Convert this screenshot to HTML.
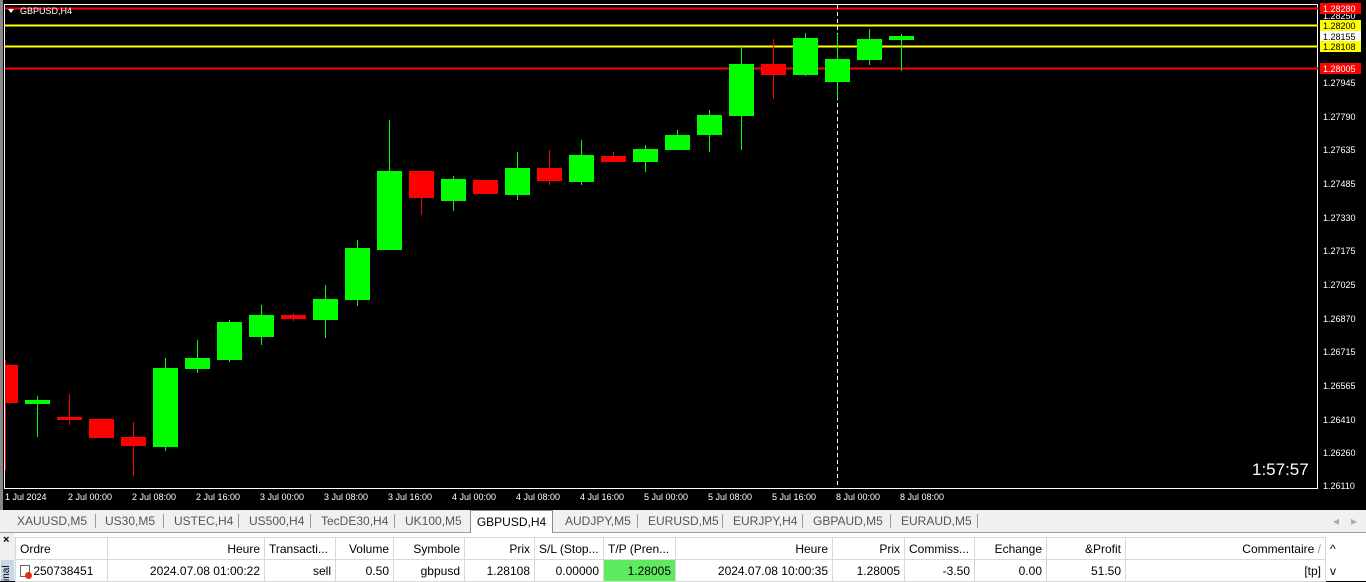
<!DOCTYPE html>
<html><head><meta charset="utf-8"><style>
*{margin:0;padding:0;box-sizing:border-box}
body{width:1366px;height:581px;overflow:hidden;background:#000;font-family:"Liberation Sans",sans-serif;position:relative}
.tabs{position:absolute;left:0;top:510px;width:1366px;height:23px;background:#f0f0f0;border-bottom:1px solid #a0a0a0;font-size:12px;color:#555}
.tab{position:absolute;top:4px}
.sep{position:absolute;top:4px;width:1px;height:14px;background:#999}
.act{position:absolute;left:470px;top:0;width:83px;height:23px;background:#fff;border:1px solid #888;border-bottom:none;color:#000;text-align:center;padding-top:4px}
.tbl{position:absolute;left:0;top:533px;width:1366px;height:48px;background:#fff}
.lstrip{position:absolute;left:0;top:533px;width:15px;height:48px;background:#f0f0f0}
table{position:absolute;left:15px;top:537px;border-collapse:collapse;font-size:12px;color:#000}
td{height:22px;border:1px solid #d8d8d8;padding:0 4px;white-space:nowrap;overflow:hidden}
tr.h td{height:22px}
.r{text-align:right}
</style></head><body>
<svg width="1366" height="510" style="position:absolute;left:0;top:0" font-family="Liberation Sans" font-size="9">
<rect x="0" y="0" width="1366" height="510" fill="#000"/>
<rect x="0" y="0" width="3" height="510" fill="#888"/>
<rect x="4.5" y="4.5" width="1313" height="484" fill="none" stroke="#fff"/>
<line x1="5" y1="8.5" x2="1318" y2="8.5" stroke="#f00" stroke-width="2"/>
<line x1="5" y1="25.5" x2="1318" y2="25.5" stroke="#ff0" stroke-width="2"/>
<line x1="5" y1="46.5" x2="1318" y2="46.5" stroke="#ff0" stroke-width="2"/>
<line x1="5" y1="68.5" x2="1318" y2="68.5" stroke="#f00" stroke-width="2"/>
<line x1="837.5" y1="5" x2="837.5" y2="488" stroke="#fff" stroke-dasharray="4,3"/>
<g id="c"></g>
<polygon points="8,9 14,9 11,13" fill="#fff"/>
<text x="20" y="14" fill="#fff">GBPUSD,H4</text>
<g fill="#fff">
<text x="1323" y="19">1.28250</text><text x="1323" y="86">1.27945</text><text x="1323" y="120">1.27790</text>
<text x="1323" y="153">1.27635</text><text x="1323" y="187">1.27485</text><text x="1323" y="221">1.27330</text>
<text x="1323" y="254">1.27175</text><text x="1323" y="288">1.27025</text><text x="1323" y="322">1.26870</text>
<text x="1323" y="355">1.26715</text><text x="1323" y="389">1.26565</text><text x="1323" y="423">1.26410</text>
<text x="1323" y="456">1.26260</text><text x="1323" y="489">1.26110</text>
</g>
<rect x="1320" y="3" width="41" height="11" fill="#f00"/><text x="1323" y="12" fill="#fff">1.28280</text>
<rect x="1320" y="20" width="41" height="11" fill="#ff0"/><text x="1323" y="29" fill="#000">1.28200</text>
<rect x="1320" y="31" width="41" height="11" fill="#fff"/><text x="1323" y="40" fill="#000">1.28155</text>
<rect x="1320" y="41" width="41" height="11" fill="#ff0"/><text x="1323" y="50" fill="#000">1.28108</text>
<rect x="1320" y="63" width="41" height="11" fill="#f00"/><text x="1323" y="72" fill="#fff">1.28005</text>
<g fill="#fff">
<text x="5" y="500">1 Jul 2024</text><text x="68" y="500">2 Jul 00:00</text><text x="132" y="500">2 Jul 08:00</text>
<text x="196" y="500">2 Jul 16:00</text><text x="260" y="500">3 Jul 00:00</text><text x="324" y="500">3 Jul 08:00</text>
<text x="388" y="500">3 Jul 16:00</text><text x="452" y="500">4 Jul 00:00</text><text x="516" y="500">4 Jul 08:00</text>
<text x="580" y="500">4 Jul 16:00</text><text x="644" y="500">5 Jul 00:00</text><text x="708" y="500">5 Jul 08:00</text>
<text x="772" y="500">5 Jul 16:00</text><text x="836" y="500">8 Jul 00:00</text><text x="900" y="500">8 Jul 08:00</text>
</g>
<text x="1252" y="475" fill="#fff" font-size="17">1:57:57</text>
</svg>
<div class="tabs">
<span class="tab" style="left:17px">XAUUSD,M5</span><span class="sep" style="left:95px"></span>
<span class="tab" style="left:105px">US30,M5</span><span class="sep" style="left:163px"></span>
<span class="tab" style="left:174px">USTEC,H4</span><span class="sep" style="left:238px"></span>
<span class="tab" style="left:249px">US500,H4</span><span class="sep" style="left:310px"></span>
<span class="tab" style="left:321px">TecDE30,H4</span><span class="sep" style="left:394px"></span>
<span class="tab" style="left:405px">UK100,M5</span>
<div class="act">GBPUSD,H4</div>
<span class="tab" style="left:565px">AUDJPY,M5</span><span class="sep" style="left:637px"></span>
<span class="tab" style="left:648px">EURUSD,M5</span><span class="sep" style="left:722px"></span>
<span class="tab" style="left:733px">EURJPY,H4</span><span class="sep" style="left:802px"></span>
<span class="tab" style="left:813px">GBPAUD,M5</span><span class="sep" style="left:890px"></span>
<span class="tab" style="left:901px">EURAUD,M5</span><span class="sep" style="left:977px"></span>
<span class="tab" style="left:1333px;color:#aaa">◂</span><span class="tab" style="left:1351px;color:#aaa">▸</span>
</div>
<div class="tbl"></div>
<div class="lstrip"><div style="font-size:11px;font-weight:bold;padding-left:3px;margin-top:1px">×</div><div style="position:absolute;left:1px;top:27px;width:13px;height:21px;background:#c8d8ea;font-size:10px;writing-mode:vertical-rl;transform:rotate(180deg);overflow:hidden">inal</div></div>
<table>
<tr class="h"><td style="width:92px">Ordre</td><td class="r" style="width:157px">Heure</td><td style="width:71px">Transacti...</td><td class="r" style="width:58px">Volume</td><td class="r" style="width:71px">Symbole</td><td class="r" style="width:70px">Prix</td><td style="width:69px">S/L (Stop...</td><td style="width:72px">T/P (Pren...</td><td class="r" style="width:157px">Heure</td><td class="r" style="width:72px">Prix</td><td style="width:70px">Commiss...</td><td class="r" style="width:72px">Echange</td><td class="r" style="width:79px">&amp;Profit</td><td class="r" style="width:200px">Commentaire <span style="color:#999">/</span></td><td style="width:22px;border:none">^</td></tr>
<tr><td><span style="display:inline-block;width:10px;height:12px;border:1px solid #666;vertical-align:-2px;position:relative"><span style="position:absolute;right:-3px;bottom:-3px;width:7px;height:7px;border-radius:50%;background:#e03010"></span></span> 250738451</td><td class="r">2024.07.08 01:00:22</td><td class="r">sell</td><td class="r">0.50</td><td class="r">gbpusd</td><td class="r">1.28108</td><td class="r">0.00000</td><td class="r" style="background:#5eea5e">1.28005</td><td class="r">2024.07.08 10:00:35</td><td class="r">1.28005</td><td class="r">-3.50</td><td class="r">0.00</td><td class="r">51.50</td><td class="r">[tp]</td><td style="border:none">v</td></tr>
</table>
<script>
var d=[[1,0,365,403,360,470],[0,1,400,404,396,437],[0,0,417,420,394,425],[0,0,419,438,419,438],[0,0,437,446,422,476],[0,1,368,447,358,451],[0,1,358,369,340,373],[0,1,322,360,320,362],[0,1,315,337,305,345],[0,0,315,319,313,321],[0,1,299,320,285,338],[0,1,248,300,240,306],[0,1,171,250,120,250],[0,0,171,198,171,215],[0,1,179,201,176,211],[0,0,180,194,180,194],[0,1,168,195,152,200],[0,0,168,181,150,185],[0,1,155,182,140,185],[0,0,156,162,152,162],[0,1,149,162,145,172],[0,1,135,150,130,150],[0,1,115,135,110,152],[0,1,64,116,46,150],[0,0,64,75,39,99],[0,1,38,75,33,76],[0,1,59,82,34,99],[0,1,39,60,29,65],[0,1,36,40,34,71]];
var s='';d.forEach(function(c,i){var c2=c[1]?'#00ff00':'#ff0000';var l=i==0?5:25+(i-1)*32;var w=i==0?13:25;var cx=i==0?5.5:l+12.5;
s+='<line x1="'+cx+'" y1="'+c[4]+'" x2="'+cx+'" y2="'+c[5]+'" stroke="'+c2+'"/><rect x="'+l+'" y="'+c[2]+'" width="'+w+'" height="'+(c[3]-c[2])+'" fill="'+c2+'"/>';});
document.getElementById('c').innerHTML=s;
</script>
</body></html>
